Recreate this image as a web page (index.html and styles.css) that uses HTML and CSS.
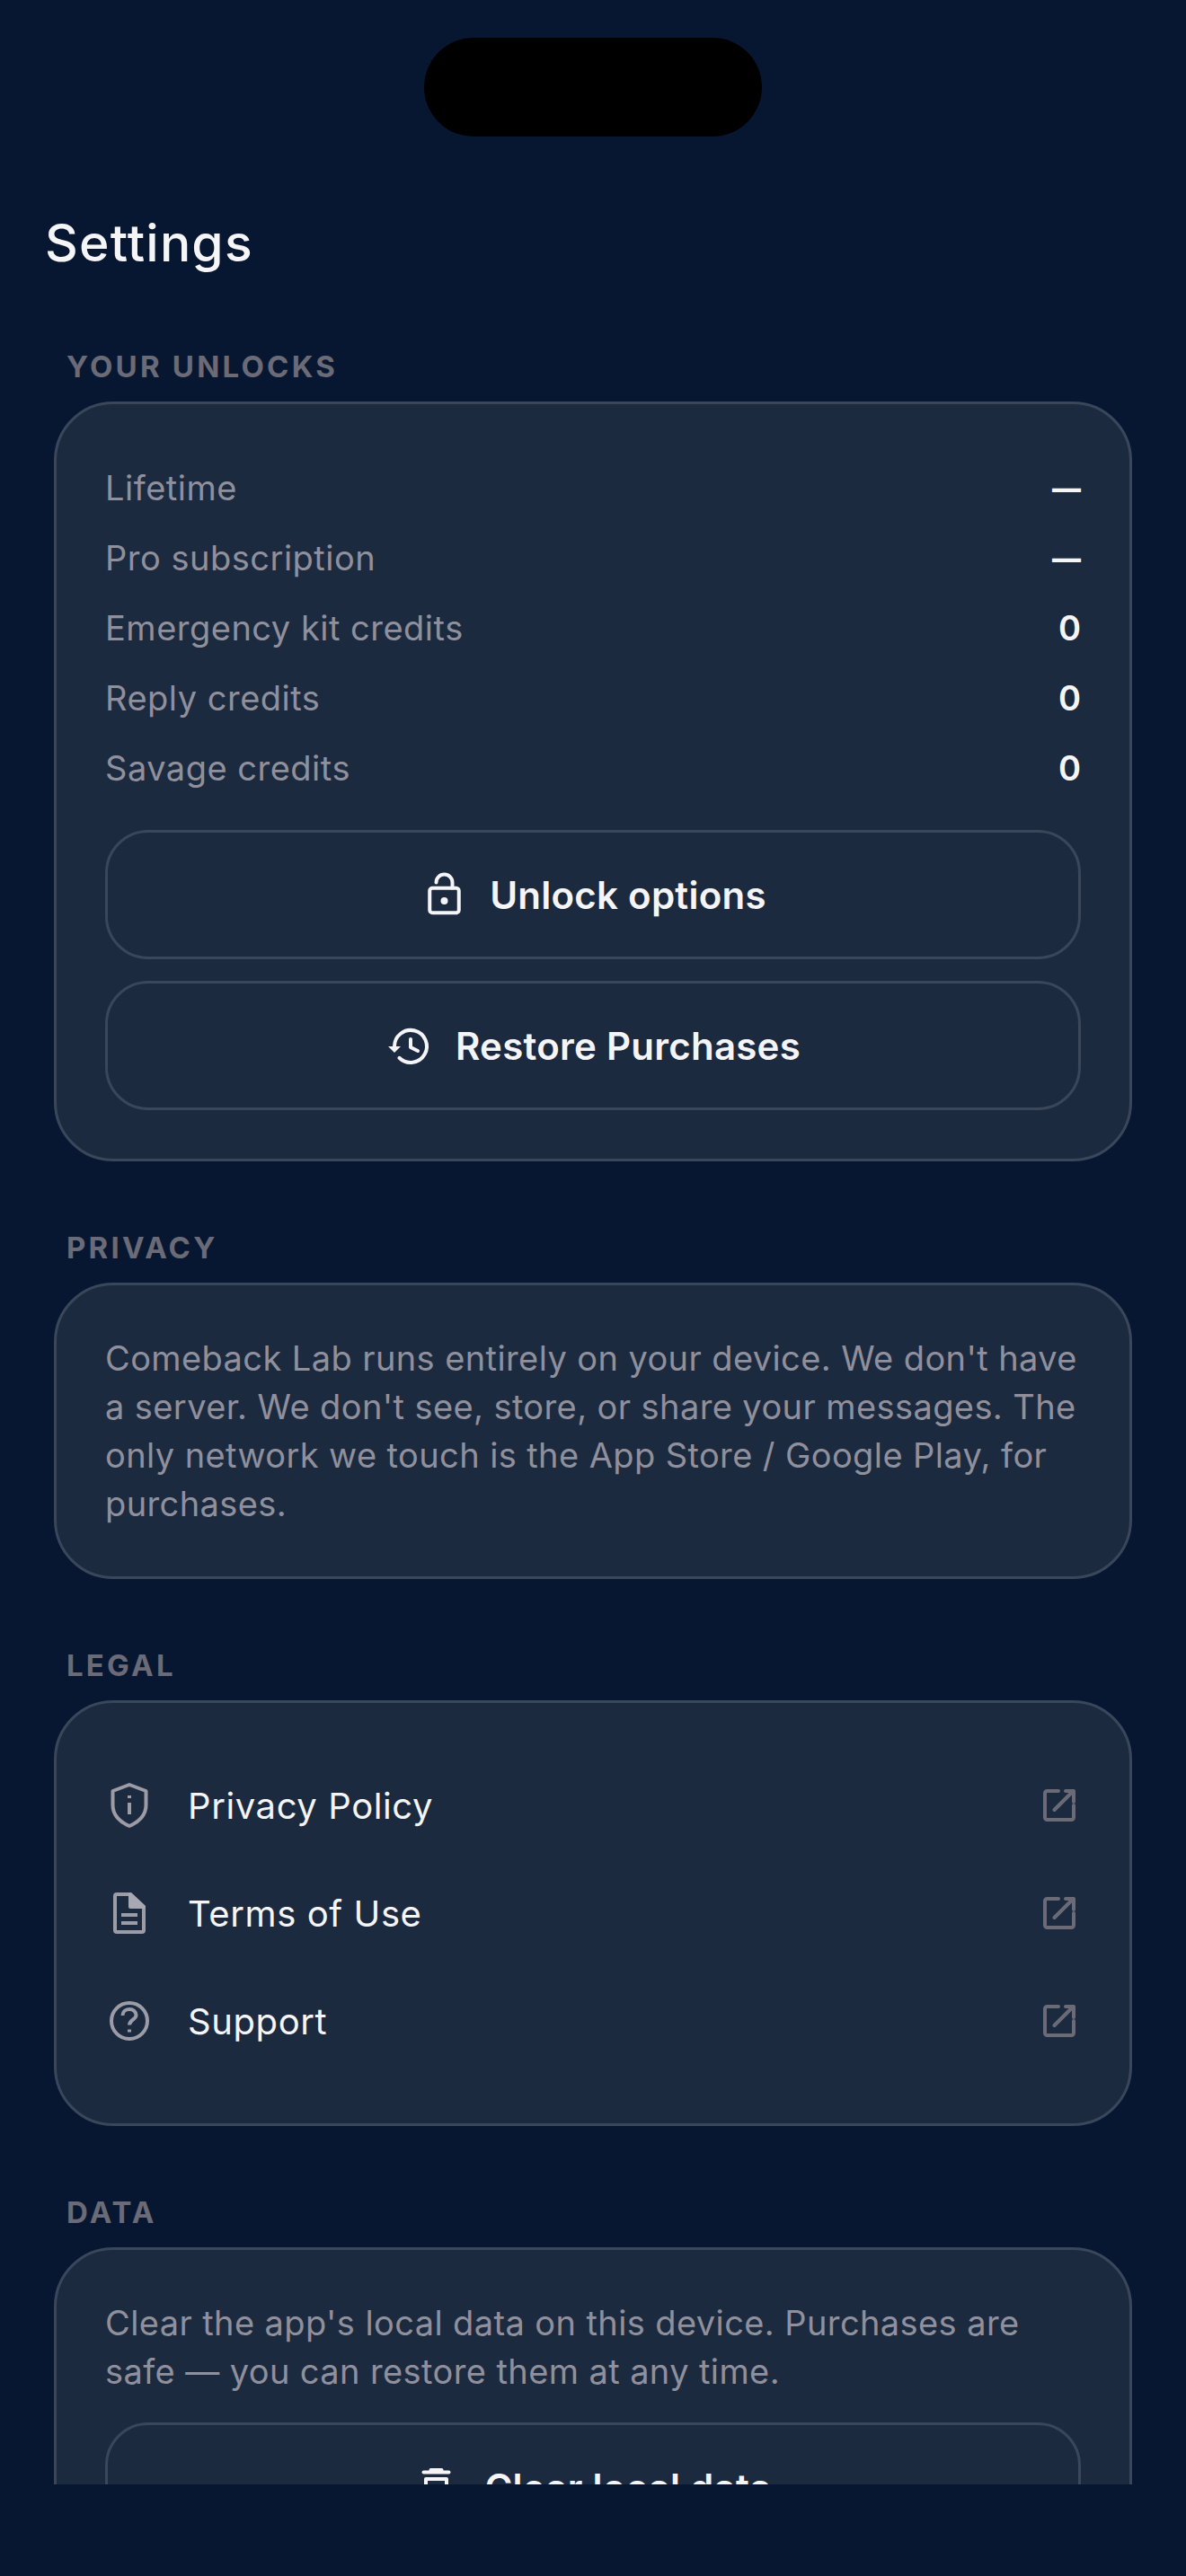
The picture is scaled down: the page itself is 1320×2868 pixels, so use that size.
FILE: index.html
```html
<!DOCTYPE html>
<html lang="en">
<head>
<meta charset="utf-8">
<title>Settings</title>
<link rel="stylesheet" href="styles.css">
</head>
<body>
<div class="island"></div>
<main class="scroll">
  <h1 class="title">Settings</h1>

  <section class="section">
    <h2 class="label">YOUR UNLOCKS</h2>
    <div class="card">
      <div class="rows">
        <div class="row"><span>Lifetime</span><b class="dash">—</b></div>
        <div class="row"><span>Pro subscription</span><b class="dash">—</b></div>
        <div class="row"><span>Emergency kit credits</span><b>0</b></div>
        <div class="row"><span>Reply credits</span><b>0</b></div>
        <div class="row"><span>Savage credits</span><b>0</b></div>
      </div>
      <div class="btn"><svg class="ic-btn" viewBox="-3.5 0 48 48"><rect x="7.750" y="16.750" width="32.500" height="27.500" rx="3"/><path d="M15 10.500a9 9 0 0 1 18 0v6"/><circle class="fill" cx="24" cy="31" r="4"/></svg><span>Unlock options</span></div>
      <div class="btn"><svg class="ic-btn" viewBox="-2 0 48 48"><path d="M8 25A18 18 0 1 1 13.400 37.800"/><path class="fill" d="M1 25h14l-7 7z"/><path d="M26 17v9l8 4"/></svg><span>Restore Purchases</span></div>
    </div>
  </section>

  <section class="section">
    <h2 class="label">PRIVACY</h2>
    <div class="card">
      <p class="para">Comeback Lab runs entirely on your device. We don't have a server. We don't see, store, or share your messages. The only network we touch is the App Store / Google Play, for purchases.</p>
    </div>
  </section>

  <section class="section">
    <h2 class="label">LEGAL</h2>
    <div class="card">
      <div class="link"><svg class="ic-link" viewBox="0 0 54 60"><path d="M27 7L45.500 14V30C45.500 41 37 49 27 53C17 49 8.500 41 8.500 30V14Z"/><path d="M27 27v13"/><path d="M27 19v3"/></svg><span class="link-text">Privacy Policy</span><svg class="ic-ext" viewBox="0 0 36 36"><path d="M17 2H4.500A2.500 2.500 0 0 0 2 4.500v27A2.500 2.500 0 0 0 4.500 34h27a2.500 2.500 0 0 0 2.500-2.500V18"/><path d="M12.500 23L33 2.500"/><path d="M25 2h9v12"/></svg></div>
      <div class="link"><svg class="ic-link" viewBox="0 0 54 60"><path d="M13 9H28L43 23V49a2 2 0 0 1-2 2H13a2 2 0 0 1-2-2V11a2 2 0 0 1 2-2z"/><path class="fill" d="M28 9L43 23H28z"/><path d="M18 32h18M18 41h18"/></svg><span class="link-text">Terms of Use</span><svg class="ic-ext" viewBox="0 0 36 36"><path d="M17 2H4.500A2.500 2.500 0 0 0 2 4.500v27A2.500 2.500 0 0 0 4.500 34h27a2.500 2.500 0 0 0 2.500-2.500V18"/><path d="M12.500 23L33 2.500"/><path d="M25 2h9v12"/></svg></div>
      <div class="link"><svg class="ic-link" viewBox="0 0 54 60"><circle cx="27" cy="30" r="20"/><path d="M19.500 24c0-4 3-7 7.500-7s7.500 3 7.500 6.500c0 5-7.500 5.500-7.500 11"/><path d="M27 39.500v3"/></svg><span class="link-text">Support</span><svg class="ic-ext" viewBox="0 0 36 36"><path d="M17 2H4.500A2.500 2.500 0 0 0 2 4.500v27A2.500 2.500 0 0 0 4.500 34h27a2.500 2.500 0 0 0 2.500-2.500V18"/><path d="M12.500 23L33 2.500"/><path d="M25 2h9v12"/></svg></div>
    </div>
  </section>

  <section class="section">
    <h2 class="label">DATA</h2>
    <div class="card">
      <p class="para para-gap">Clear the app's local data on this device. Purchases are safe — you can restore them at any time.</p>
      <div class="btn"><svg class="ic-btn" viewBox="0 0 48 48"><path d="M10.500 7.500h28"/><path d="M18.500 7V5h12v2"/><path d="M13 15h23v28a2 2 0 0 1-2 2H15a2 2 0 0 1-2-2z"/></svg><span>Clear local data</span></div>
    </div>
  </section>
</main>
</body>
</html>
```

FILE: styles.css
```css
* { box-sizing: border-box; }
html, body { margin: 0; height: 2868px; overflow: hidden; }
body {
  background: #081731;
  font-family: Inter, "Liberation Sans", sans-serif;
  color: #f5f5f7;
}
.island {
  position: absolute;
  left: 472px;
  top: 42px;
  width: 376px;
  height: 110px;
  border-radius: 55px;
  background: #000;
}
.scroll {
  height: 2766px;
  overflow: hidden;
  padding: 238px 60px 0;
}
.title {
  margin: 0 0 0 -10px;
  font-size: 57px;
  line-height: 66px;
  font-weight: 500;
  letter-spacing: 1.2px;
  color: #f5f5f7;
}
.section { margin-top: 72px; }
.section:first-of-type { margin-top: 80px; }
.label {
  margin: 0 0 15px 14px;
  font-size: 33px;
  line-height: 48px;
  font-weight: 700;
  letter-spacing: 3.2px;
  color: #6a6b76;
}
.card {
  border: 3px solid #3a4659;
  border-radius: 66px;
  background: #1c2a40;
  padding: 54px;
}
.rows { margin-bottom: 30px; }
.row {
  display: flex;
  justify-content: space-between;
  align-items: center;
  height: 78px;
  font-size: 38px;
  color: #90909c;
  letter-spacing: 0.5px;
}
.row b { font-weight: 600; color: #f5f5f7; font-size: 38px; letter-spacing: 0; }
.row .dash { font-size: 32px; font-weight: 800; }
.btn {
  display: flex;
  align-items: center;
  justify-content: center;
  gap: 30px;
  height: 144px;
  border: 3px solid #3a4659;
  border-radius: 48px;
  font-size: 42px;
  font-weight: 600;
  letter-spacing: 0.25px;
  color: #f5f5f7;
}
.btn + .btn { margin-top: 24px; }
.ic-btn {
  width: 48px;
  height: 48px;
  overflow: visible;
  fill: none;
  stroke: #f5f5f7;
  stroke-width: 4;
  stroke-linecap: round;
  stroke-linejoin: round;
}
.ic-btn .fill { fill: #f5f5f7; stroke: none; }
.para {
  margin: 0;
  font-size: 38px;
  line-height: 54px;
  color: #90909c;
  letter-spacing: 0.4px;
}
.para-gap { margin-bottom: 30px; }
.link {
  display: flex;
  align-items: center;
  gap: 38px;
  height: 120px;
}
.link-text {
  flex: 1;
  font-size: 40px;
  letter-spacing: 0.6px;
  color: #f5f5f7;
}
.ic-link {
  width: 54px;
  height: 60px;
  fill: none;
  stroke: #9c9ca6;
  stroke-width: 4;
  stroke-linejoin: round;
}
.ic-link .fill { fill: #a8a8b2; stroke: #a8a8b2; }
.ic-ext {
  width: 36px;
  height: 36px;
  margin-right: 6px;
  fill: none;
  stroke: #6a6b76;
  stroke-width: 4;
  stroke-linecap: round;
  stroke-linejoin: round;
}
```
